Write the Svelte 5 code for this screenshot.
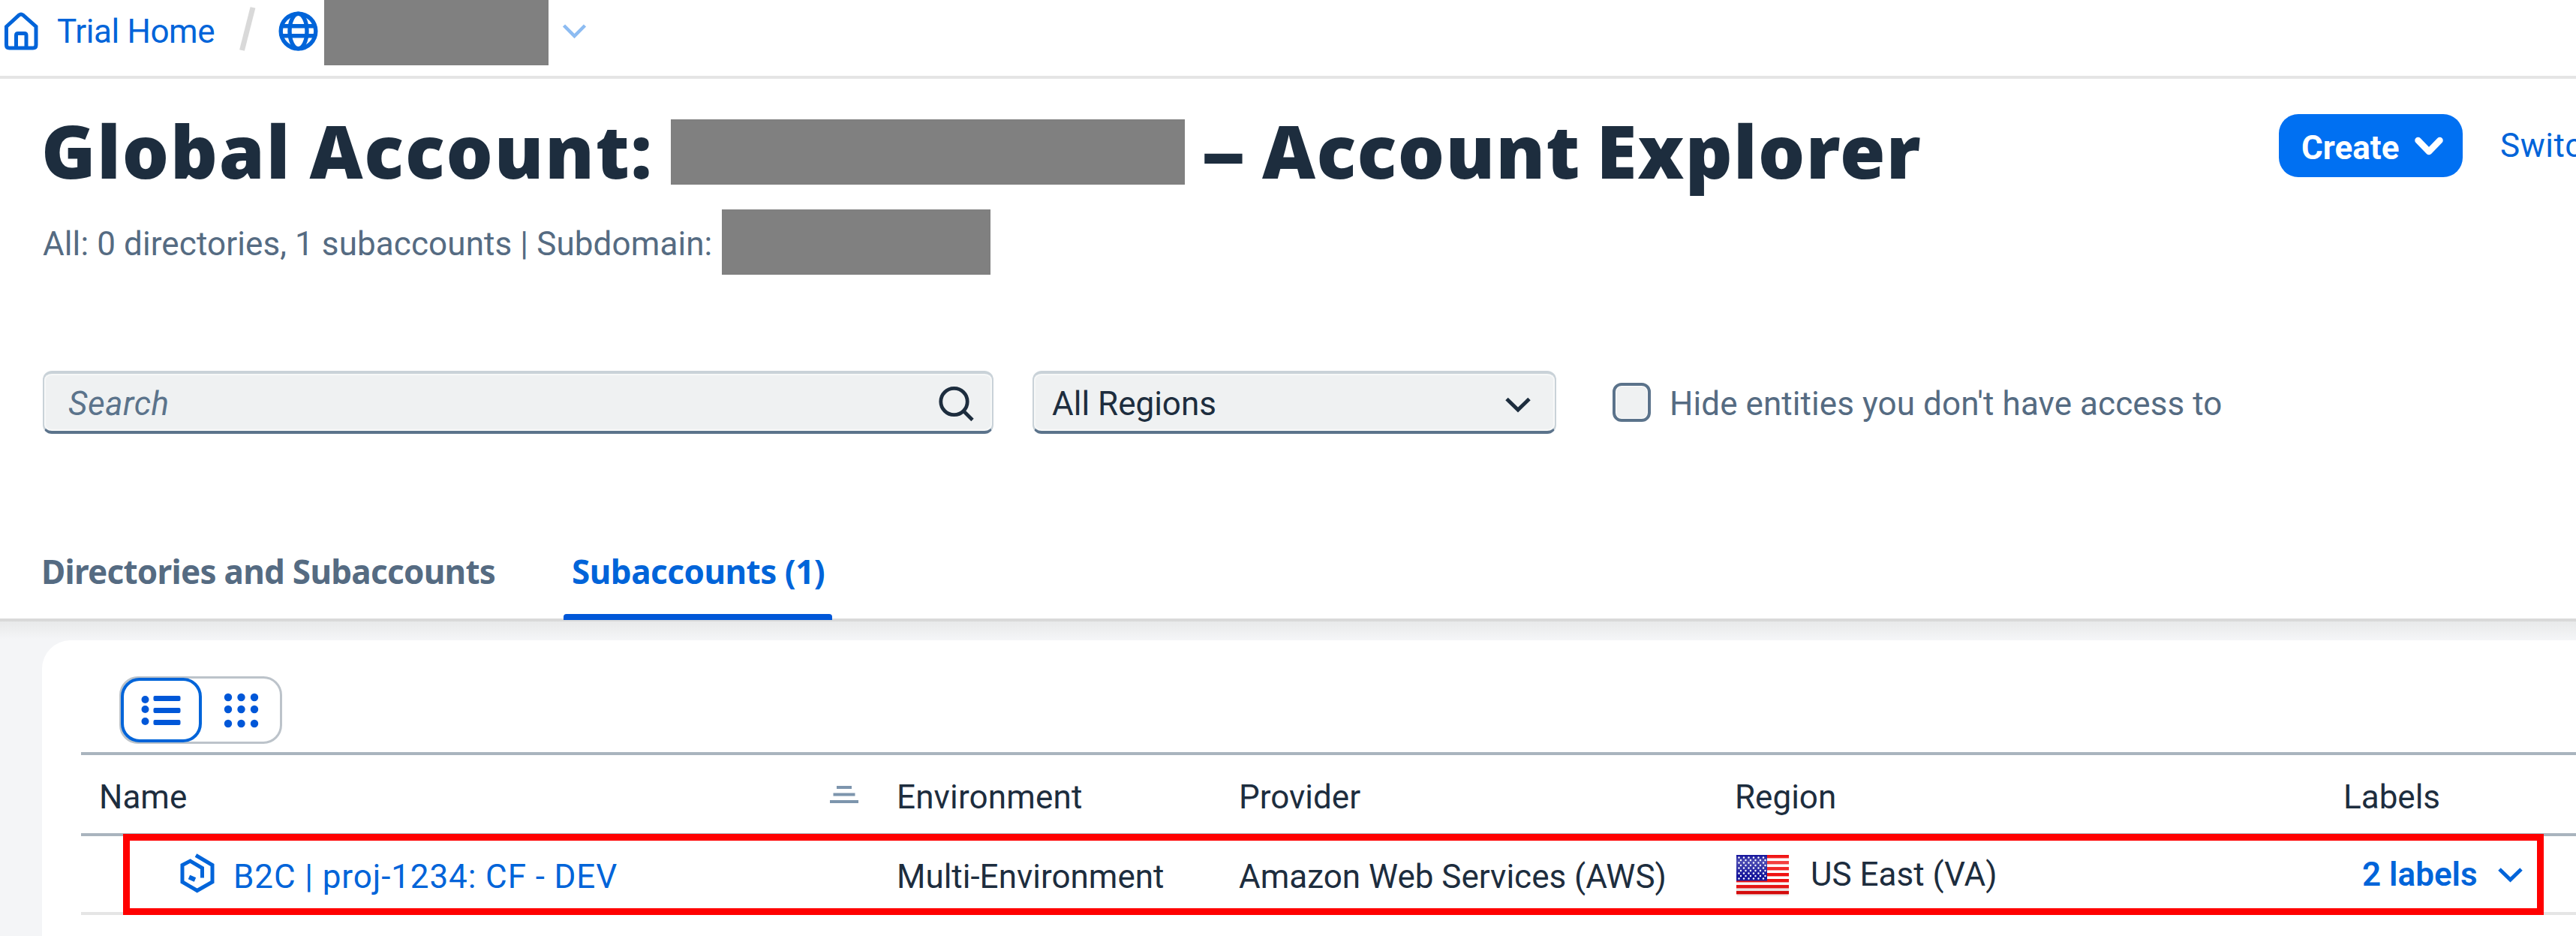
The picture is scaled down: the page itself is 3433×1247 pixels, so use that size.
<script>
  const stripes = [0, 1, 2, 3, 4, 5, 6];
  const starRows = [0, 1, 2, 3, 4, 5, 6, 7, 8];
  const starCols = [0, 1, 2, 3, 4, 5];
  const dotRows = [12, 28, 47];
  const dotCols = [10, 27.5, 45];
</script>

<div class="page">
  <header class="crumbs">
    <svg class="home" viewBox="3 13 50 57">
      <path d="M8.5 35.5 L25.5 20 Q28 18 30.5 20 L48 35.5 V60 Q48 64 44 64 H12.5 Q8.5 64 8.5 60 Z" />
      <path d="M21.5 63 V47 Q21.5 44.500 24 44.500 H32.500 Q35 44.500 35 47 V63" />
    </svg>
    <a class="trial" href="#home">Trial Home</a>
    <svg class="slash" viewBox="318 8 24 60"><path d="M322.500 67 L337 10" /></svg>
    <svg class="globe" viewBox="370 14 56 56">
      <circle cx="397.500" cy="41.500" r="23.300" />
      <ellipse cx="397.500" cy="41.500" rx="11.500" ry="23.300" />
      <path d="M376 34.800 H419 M376 47.800 H419" />
    </svg>
    <span class="redacted account"></span>
    <svg class="arrow" viewBox="748 28 36 28"><path d="M751.500 34 L765.500 48 L779.500 34" /></svg>
  </header>

  <section class="titlebar">
    <div class="heading">
      <h1>
        <span class="global">Global Account:</span>
        <span class="redacted name"></span>
        <span class="dash">–</span>
        <span class="explorer">Account Explorer</span>
      </h1>
      <p class="sub"><span>All: 0 directories, 1 subaccounts | Subdomain:</span><span class="redacted domain"></span></p>
    </div>
    <button class="create">
      <span>Create</span>
      <svg viewBox="3214 178 46 34"><path d="M3222.500 187 L3237 202 L3251.500 187" /></svg>
    </button>
    <a class="switch" href="#switch">Switc</a>
  </section>

  <section class="filters">
    <div class="field search">
      <span class="placeholder">Search</span>
      <svg viewBox="1248 509 54 54">
        <circle cx="1271.500" cy="533" r="17.700" />
        <path d="M1284.500 546 L1296 557.500" />
      </svg>
    </div>
    <div class="field select">
      <span>All Regions</span>
      <svg viewBox="2002 522 40 28"><path d="M2007 529.500 L2022 544 L2037 529.500" /></svg>
    </div>
    <span class="box"></span>
    <span class="hide">Hide entities you don't have access to</span>
  </section>

  <nav class="tabs">
    <span class="tab dirs">Directories and Subaccounts</span>
    <span class="tab active">Subaccounts (1)</span>
  </nav>

  <main>
    <div class="card">
      <div class="views">
        <span class="view chosen">
          <svg viewBox="0 0 54 46">
            <circle cx="5.500" cy="9" r="5" /><circle cx="5.500" cy="22" r="5" /><circle cx="5.500" cy="38" r="5" />
            <rect x="16.500" y="4" width="36" height="7" rx="2" />
            <rect x="16.500" y="20" width="36" height="7" rx="2" />
            <rect x="16.500" y="36" width="36" height="7" rx="2" />
          </svg>
        </span>
        <span class="view">
          <svg viewBox="0 0 54 58">
            {#each dotRows as y}{#each dotCols as x}<circle cx={x} cy={y} r="5.200" />{/each}{/each}
          </svg>
        </span>
      </div>

      <div class="table">
        <div class="row head">
          <span class="first">Name
            <svg viewBox="0 0 38 24"><path d="M9 2 H29 M4.500 11.500 H33.500 M0 21 H38" /></svg>
          </span>
          <span class="env">Environment</span>
          <span>Provider</span>
          <span>Region</span>
          <span>Labels</span>
        </div>
        <div class="row body">
          <span class="link">
            <svg viewBox="239 1133 48 56">
              <path d="M261 1137.500 L283 1150.500 V1173 L262.700 1184.500 L243 1173 V1150.500 L253.500 1145 L269.500 1154.500 V1167.500" />
              <path class="mark" d="M252 1166.500 L260 1170" />
            </svg>
            <a href="#sub">B2C | proj-1234: CF - DEV</a>
          </span>
          <span class="multi">Multi-Environment</span>
          <span class="aws">Amazon Web Services (AWS)</span>
          <span class="region">
            <svg viewBox="0 0 70 58">
              <defs>
                <linearGradient id="gloss" x1="0" y1="0" x2="0" y2="1">
                  <stop offset="0" stop-color="#fff" stop-opacity="0" />
                  <stop offset="0.15" stop-color="#fff" stop-opacity="0.25" />
                  <stop offset="0.55" stop-color="#fff" stop-opacity="0" />
                  <stop offset="1" stop-color="#400" stop-opacity="0.2" />
                </linearGradient>
              </defs>
              <rect x="1" y="51" width="68" height="4" fill="#e9eeee" />
              <rect width="70" height="52" fill="#fff" />
              {#each stripes as i}<rect y={i * 8} width="70" height="4.400" fill="#f00a0a" />{/each}
              <rect width="41" height="34.500" fill="#12129a" />
              {#each starRows as r}{#each starCols as c}
                <circle cx={3.500 + c * 6.500 + (r % 2) * 2.500} cy={3.500 + r * 3.500} r="1.200" fill="#fff" />
              {/each}{/each}
              <rect width="70" height="52" fill="url(#gloss)" />
            </svg>
            US East (VA)
          </span>
          <span class="labels">
            <span>2 labels</span>
            <svg viewBox="3326 1151 40 26"><path d="M3331 1157 L3345.500 1171 L3360 1157" /></svg>
          </span>
        </div>
        <div class="highlight"></div>
      </div>
    </div>
  </main>
</div>

<style>
  :global(body) { background: #fff; overflow: hidden; }
  * { box-sizing: border-box; }
  .page {
    width: 3433px; height: 1247px; overflow: hidden;
    display: flex; flex-direction: column;
    font: 400 44px/60px Roboto, "Liberation Sans", sans-serif;
    color: #1d2d3e; white-space: nowrap;
  }
  a { color: #0064d9; text-decoration: none; }
  svg { display: block; flex: none; fill: none; stroke: #0064d9; stroke-width: 5; }
  .redacted { background: #808080; height: 87px; flex: none; }

  .crumbs { height: 105px; flex: none; display: flex; align-items: flex-start; border-bottom: 4px solid #e5e5e5; }
  .home { width: 50px; height: 57px; margin: 13px 0 0 3px; }
  .trial { width: 242px; margin: 12px 0 0 23px; letter-spacing: -0.4px; }
  .slash { width: 24px; height: 60px; margin-top: 8px; stroke: #d9d9d9; stroke-width: 7; }
  .globe { width: 56px; height: 56px; margin: 14px 0 0 28px; stroke-width: 5.4; }
  .account { width: 299px; margin-left: 6px; }
  .arrow { width: 36px; height: 28px; margin: 28px 0 0 17px; stroke: #8dbcf2; stroke-width: 4.5; }

  .titlebar { height: 389px; flex: none; display: flex; align-items: flex-start; padding-left: 56px; }
  .heading { flex: none; width: 2981px; padding-top: 54px; }
  h1 { margin: 0; display: flex; height: 87px; font: 900 98px/82px "Noto Sans", sans-serif; }
  .global { width: 838px; letter-spacing: 1.8px; word-spacing: -3px; margin-left: -1px; margin-right: 1px; }
  .name { width: 685px; }
  .dash { width: 103px; text-align: center; transform: scaleX(1.2); }
  .explorer { letter-spacing: 1.3px; word-spacing: -6px; }
  .sub { margin: 33px 0 0; height: 87px; display: flex; line-height: 92px; color: #556b82; }
  .sub span:first-child { width: 906px; padding-left: 1px; letter-spacing: 0.1px; }
  .domain { width: 358px; }
  .create {
    flex: none; width: 245px; height: 84px; margin: 47px 0 0; padding: 6px 0 0 30px;
    border: 0; border-radius: 26px; background: #0070f2; color: #fff;
    font: 700 44px/70px Roboto, sans-serif; display: flex; align-items: flex-start; text-align: left;
  }
  .create span { width: 147px; padding-top: 4px; }
  .create svg { width: 46px; height: 34px; margin-top: 20px; stroke: #fff; stroke-width: 8.5; stroke-linecap: round; stroke-linejoin: round; }
  .switch { flex: none; margin: 59px 0 0 50px; letter-spacing: 0.5px; }

  .filters { height: 84px; flex: none; display: flex; align-items: center; padding-left: 57px; }
  .field {
    height: 84px; display: flex; align-items: center; background: #eff1f2;
    border: solid #c9d2d8; border-width: 4px 2px; border-bottom-color: #5b738b; border-radius: 12px;
    box-shadow: inset 0 0 0 2px #f7f8f8;
  }
  .search { width: 1267px; padding: 3px 20px 0 32px; justify-content: space-between; margin-right: 52px; }
  .placeholder { font-style: italic; color: #5b738b; letter-spacing: 0.6px; }
  .search svg { width: 54px; height: 54px; stroke: #1d2d3e; stroke-width: 4.8; }
  .select { width: 698px; padding: 3px 29px 0 24px; justify-content: space-between; }
  .select svg { width: 40px; height: 28px; stroke: #1d2d3e; }
  .box { width: 51px; height: 52px; margin-left: 75px; border: 4px solid #5b738b; border-radius: 12px; background: #eff1f2; box-shadow: inset 0 0 0 1px #fff; }
  .hide { margin: 3px 0 0 25px; color: #556b82; letter-spacing: 0.08px; }

  .tabs {
    height: 250px; flex: none; display: flex; align-items: flex-end; padding-left: 55px;
    border-bottom: 4px solid #d9d9d9; font-family: "Noto Sans", sans-serif; font-weight: 700;
  }
  .tab { height: 93px; }
  .dirs { width: 696px; color: #556b82; letter-spacing: -0.73px; }
  .active { position: relative; width: 358px; padding-left: 11px; color: #0064d9; letter-spacing: -0.5px; }
  .active::after { content: ""; position: absolute; left: 0; right: 0; bottom: -2px; height: 8px; border-radius: 4px 4px 0 0; background: #0057d8; }

  main { flex: 1; padding: 25px 0 0 56px; background: linear-gradient(#e8e9ea, #f4f5f7 24px); }
  .card { height: 400px; border-top-left-radius: 38px; background: #fff; padding: 48px 0 0 52px; }
  .views { width: 217px; height: 90px; margin-left: 51px; display: flex; border: 3px solid #bcc3ca; border-radius: 25px; }
  .view { flex: 1; display: flex; align-items: center; justify-content: center; margin: -1px; }
  .view svg { width: 54px; stroke: none; fill: #0057d8; }
  .view:first-child svg { height: 46px; }
  .view:last-child svg { height: 58px; }
  .chosen { flex: 0 0 108px; border: 4px solid #0064d9; border-radius: 25px; }

  .table { position: relative; margin-top: 11px; border-top: 4px solid #a9b4be; }
  .row { display: grid; grid-template-columns: 1087px 456px 661px 811px 1fr; align-items: center; }
  .head { height: 108px; padding-top: 7px; border-bottom: 4px solid #a9b4be; }
  .first { display: flex; justify-content: space-between; align-items: center; padding: 0 51px 0 24px; }
  .first svg { width: 38px; height: 24px; margin-top: -6px; stroke: #7d95ad; stroke-width: 4; }
  .env { letter-spacing: 0.15px; }
  .body { height: 105px; border-bottom: 4px solid #e5e5e5; }
  .body > span { padding-top: 6px; }
  .link { display: flex; padding-left: 131px; }
  .link svg { width: 48px; height: 56px; margin: -3px 24px 0 0; }
  .link .mark { stroke-width: 6; }
  .link a { letter-spacing: 0.9px; }
  .body .region { display: flex; align-items: center; padding: 0 0 0 2px; }
  .region svg { width: 70px; height: 58px; margin-right: 29px; stroke: none; margin-top: 6px; }
  .body .labels { display: flex; align-items: center; padding: 0 0 0 25px; color: #0064d9; font-weight: 600; }
  .labels span { width: 178px; }
  .labels svg { width: 40px; height: 26px; }
  .highlight { position: absolute; left: 56px; top: 105px; width: 3226px; height: 108px; border: 9px solid #f00; }
</style>
